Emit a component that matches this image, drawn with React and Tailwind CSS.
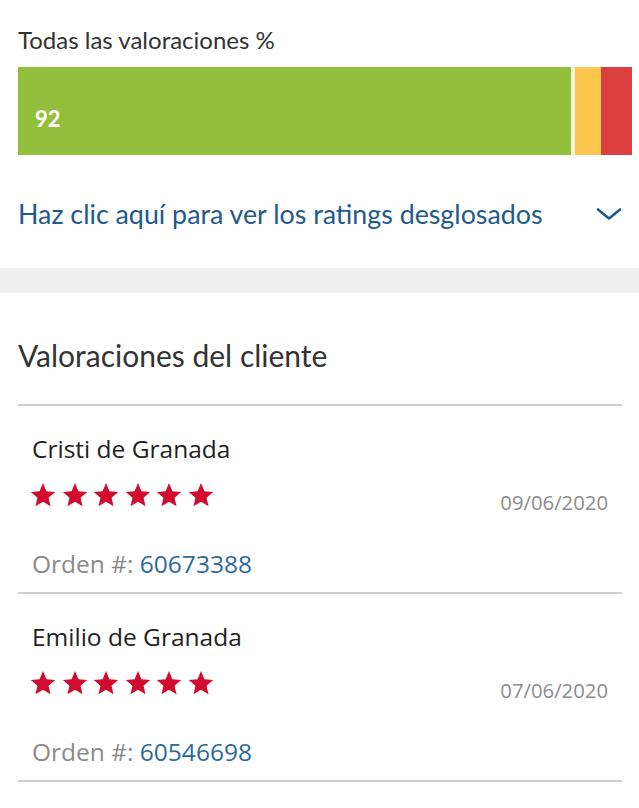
import React from 'react'

const reviews = [
  { name: 'Cristi de Granada', date: '09/06/2020', order: '60673388' },
  { name: 'Emilio de Granada', date: '07/06/2020', order: '60546698' },
]

function Star() {
  return (
    <svg width="28" height="28" viewBox="0 0 24 24" className="shrink-0">
      <path
        d="M12 1.8 14.94 8.75 22.46 9.4 16.76 14.35 18.47 21.7 12 17.8 5.53 21.7 7.24 14.35 1.54 9.4 9.06 8.75Z"
        fill="#d20c2e"
      />
    </svg>
  )
}

function Chevron() {
  return (
    <svg width="26" height="14" viewBox="0 0 26 14" fill="none">
      <path d="M2 2.5 13 11.5 24 2.5" stroke="#1f5a8a" strokeWidth="2.6" strokeLinecap="round" strokeLinejoin="round" />
    </svg>
  )
}

function ReviewItem({ review }) {
  return (
    <div className="mx-[18px] mr-[17px]">
      <div className="px-[14px] pt-[28px]">
        <p className="text-[24.5px] leading-[30px] text-[#222]" style={{ fontFamily: '"Open Sans", sans-serif' }}>
          {review.name}
        </p>
        <div className="flex justify-between items-start">
          <div className="flex items-center gap-[3.5px] h-[30px] mt-[16px] -ml-[2.8px]">
            {[0, 1, 2, 3, 4, 5].map((i) => (
              <Star key={i} />
            ))}
          </div>
          <span className="mt-[25px] text-[20.3px] leading-[26px] text-[#8c8c8c]" style={{ fontFamily: '"Open Sans", sans-serif' }}>
            {review.date}
          </span>
        </div>
        <p className="mt-[34px] text-[24.5px] leading-[30px]" style={{ fontFamily: '"Open Sans", sans-serif' }}>
          <span className="text-[#8a8a8a]">Orden #: </span>
          <span className="text-[#2d6a97]">{review.order}</span>
        </p>
      </div>
      <div className="mt-[13px] h-[2px] bg-[#cfcfcf]" />
    </div>
  )
}

export default function App() {
  return (
    <div className="w-[639px] h-[808px] bg-white overflow-hidden" style={{ fontFamily: 'Lato, sans-serif' }}>
      <div className="pl-[18px] pr-[7px] pt-[26px]">
        <h2 className="text-[24px] leading-[28px] text-[#333]">Todas las valoraciones %</h2>
        <div className="mt-[13px] h-[88px] flex">
          <div className="w-[553px] bg-[#92c03c] flex items-center pl-[17px] pt-[14px]">
            <span className="text-white text-[22px] font-bold">92</span>
          </div>
          <div className="w-[4px] bg-[#fdf3d8]" />
          <div className="w-[26px] bg-[#fbc54e]" />
          <div className="flex-1 bg-[#dc3f3f]" />
        </div>
        <div className="mt-[44px] flex items-center justify-between pr-[10px]">
          <span className="text-[26.8px] leading-[30px] text-[#1f5a8a]">
            Haz clic aquí para ver los ratings desglosados
          </span>
          <Chevron />
        </div>
      </div>
      <div className="mt-[39px] h-[25px] bg-[#efefef]" />
      <div className="pl-[18px] pt-[45px]">
        <h2 className="text-[30px] leading-[34px] text-[#333]">Valoraciones del cliente</h2>
      </div>
      <div className="mx-[18px] mr-[17px] mt-[32px] h-[2px] bg-[#cfcfcf]" />
      {reviews.map((r) => (
        <ReviewItem key={r.order} review={r} />
      ))}
    </div>
  )
}
